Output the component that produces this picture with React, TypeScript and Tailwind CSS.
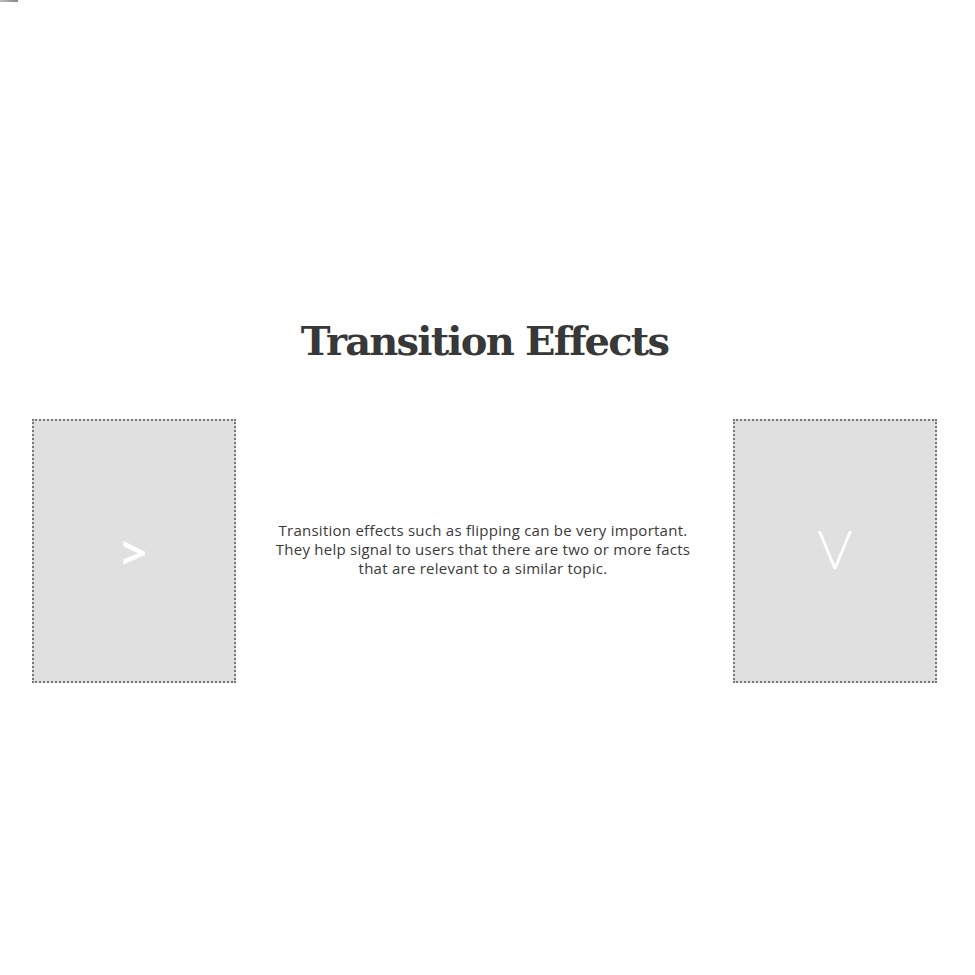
import React from 'react';

// Flip-card demo section: title, two dotted cards and a caption between them.

const Card: React.FC<{ glyph: string; glyphClass: string }> = ({ glyph, glyphClass }) => (
  <div className="w-[204px] h-[264px] shrink-0 bg-[#e0e0e0] border-2 border-dotted border-[#777] flex items-center justify-center">
    <span className={glyphClass}>{glyph}</span>
  </div>
);

const App: React.FC = () => {
  return (
    <div className="relative w-full h-[975px] bg-white overflow-hidden">
      {/* stray sliver in the top-left corner */}
      <div className="absolute left-0 top-0 w-[18px] h-[2px] bg-gradient-to-r from-[#bbb] to-[#888]" />

      <div className="flex flex-col items-center pt-[313px]">
        <h1 className="font-['DejaVu_Serif',serif] font-bold text-[40px] leading-[56px] tracking-[-1.8px] text-[#383838] ml-[-6px]">
          Transition Effects
        </h1>

        <div className="w-full mt-[50px] pl-[32px] pr-[38px] flex items-center justify-between">
          <Card
            glyph=">"
            glyphClass="font-['Open_Sans',sans-serif] font-bold text-[44px] leading-none text-white mt-[2px]"
          />
          <p className="font-['Open_Sans',sans-serif] text-[15px] leading-[19px] tracking-[0.25px] text-[#3a3a3a] text-center w-[460px] -mt-[4px] -ml-[3px]">
            Transition effects such as flipping can be very important.
            <br />
            They help signal to users that there are two or more facts
            <br />
            that are relevant to a similar topic.
          </p>
          <Card
            glyph="V"
            glyphClass="font-['Lato',sans-serif] font-light text-[54px] leading-none text-white -mt-[4px]"
          />
        </div>
      </div>
    </div>
  );
};

export default App;
